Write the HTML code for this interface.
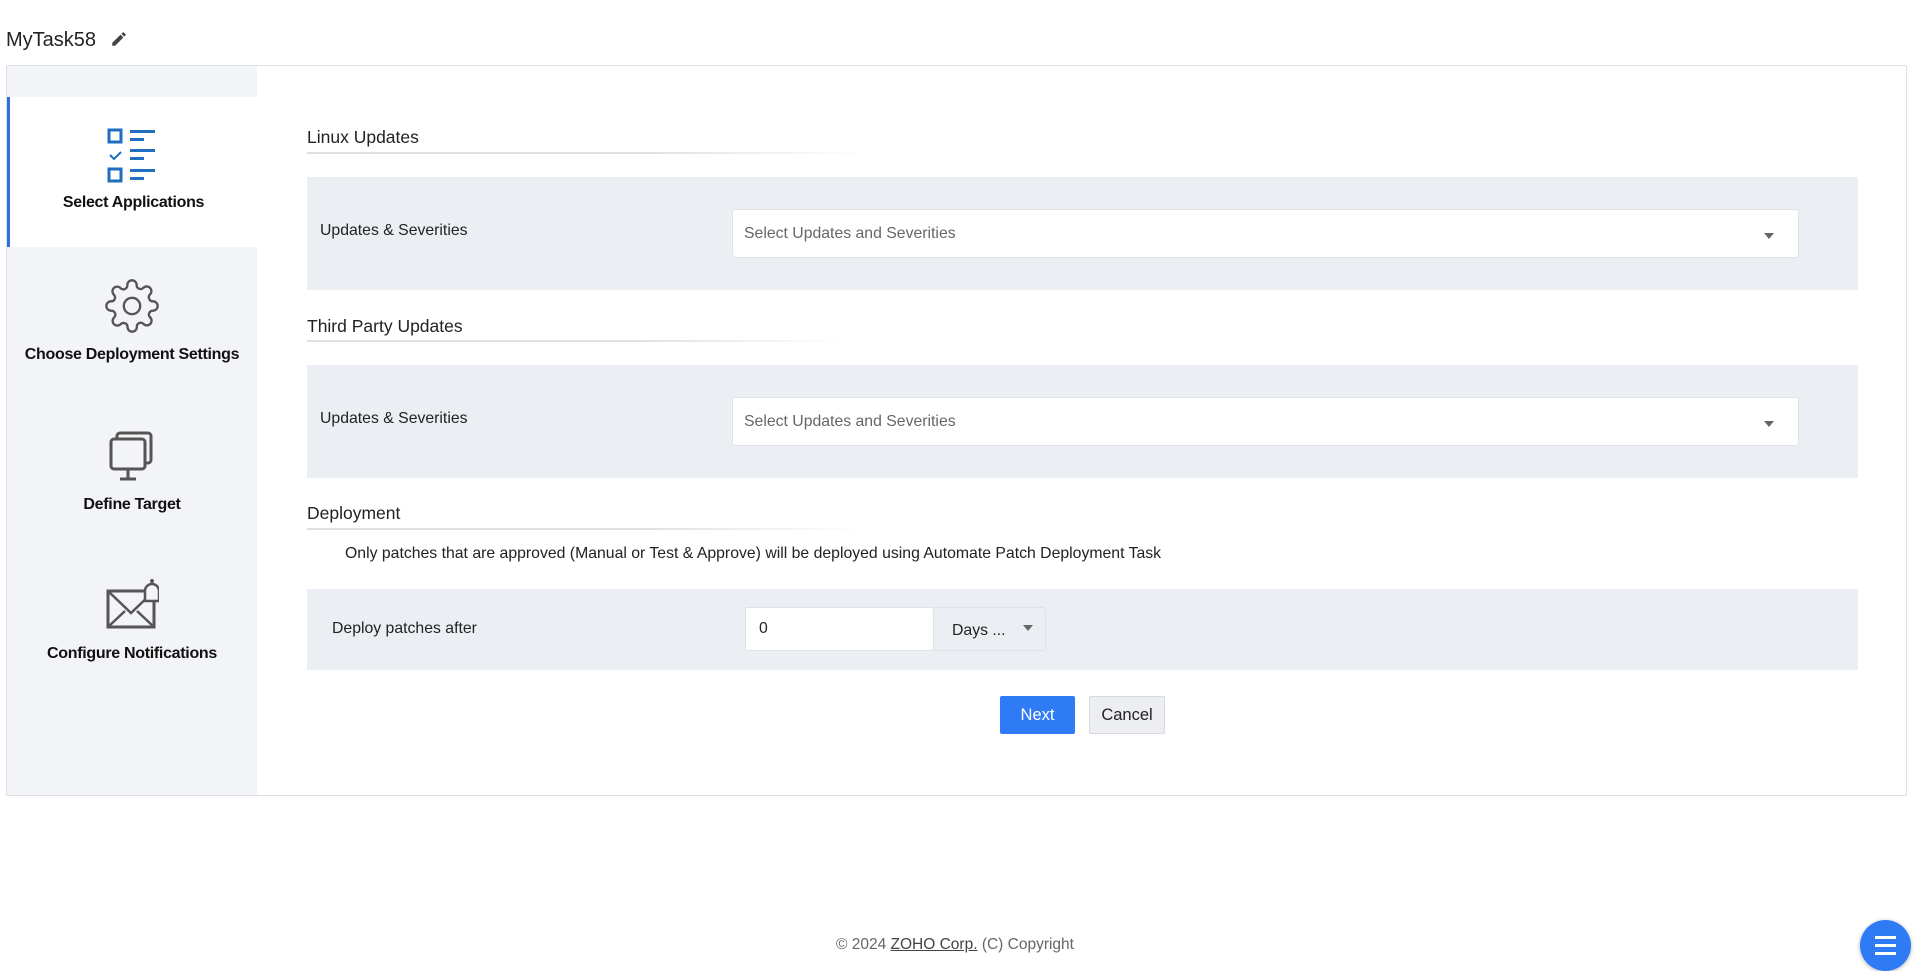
<!DOCTYPE html>
<html><head><meta charset="utf-8"><style>
*{box-sizing:border-box;margin:0;padding:0}
body{width:1919px;height:970px;background:#fff;font-family:"Liberation Sans",sans-serif;color:#222;position:relative;overflow:hidden}
.abs{position:absolute}
.title{left:6px;top:29px;font-size:20px;color:#222}
.card{left:6px;top:65px;width:1901px;height:731px;border:1px solid #dcdfe4;border-radius:2px;background:#fff}
.side{left:0;top:0;width:250px;height:729px;background:#f3f4f7}
.item{position:absolute;left:0;width:250px;text-align:center;font-weight:bold;font-size:16px;color:#111;letter-spacing:-0.3px}
.active{background:#fff;border-left:3px solid #2f6fde;top:31px;height:150px}
.h{font-size:17.5px;color:#222}
.line{height:2px;background:linear-gradient(to right,#dde0e5,#dde0e5 60%,rgba(221,224,229,0))}
.box{background:#ebeef2;left:300px;width:1551px}
.lbl{font-size:15.8px;color:#222}
.sel{background:#fff;border:1px solid #dfe2e6;border-radius:3px;font-size:15.8px;color:#666;padding-left:11px;display:flex;align-items:center}
.arrow{position:absolute;right:24px;top:50%;margin-top:-1px;width:0;height:0;border-left:5px solid transparent;border-right:5px solid transparent;border-top:6px solid #666}
.btn{font-size:16.5px;display:flex;align-items:center;justify-content:center;border-radius:2px}
</style></head><body>
<div class="abs title">MyTask58 <svg width="18" height="18" viewBox="0 0 24 24" style="vertical-align:-2px;margin-left:8px"><path d="M3 17.2V21h3.8L17.8 10l-3.8-3.8L3 17.2zM20.7 7.0c.4-.4.4-1 0-1.4l-2.3-2.3c-.4-.4-1-.4-1.4 0l-1.8 1.8 3.8 3.8 1.7-1.9z" fill="#444"/></svg></div>
<div class="abs card">
 <div class="abs side">
  <div class="item active">
   <svg width="52" height="56" viewBox="0 0 52 56" style="margin-top:30px;margin-left:-3px"><g fill="none" stroke="#1e6fc0" stroke-width="3"><rect x="3" y="3" width="12" height="12"/><rect x="3" y="42" width="12" height="12"/></g><g fill="#1e6fc0"><rect x="24" y="3" width="25" height="3"/><rect x="24" y="11" width="14" height="3"/><rect x="24" y="22" width="25" height="3"/><rect x="24" y="30" width="14" height="3"/><rect x="24" y="42" width="25" height="3"/><rect x="24" y="50" width="14" height="3"/></g><path d="M4 28l4 4 7-7" stroke="#1e6fc0" stroke-width="2" fill="none"/></svg>
   <div style="margin-top:6px">Select Applications</div>
  </div>
  <div class="item" style="top:212px">
   <svg width="56" height="56" viewBox="0 0 24 24"><path d="M12 15.5a3.5 3.5 0 1 0 0-7 3.5 3.5 0 0 0 0 7z" fill="none" stroke="#555" stroke-width="1"/><path d="M19.4 15a1.65 1.65 0 0 0 .33 1.82l.06.06a2 2 0 1 1-2.830 2.83l-.06-.06a1.65 1.65 0 0 0-1.82-.33 1.65 1.65 0 0 0-1 1.51V21a2 2 0 1 1-4 0v-.09A1.65 1.65 0 0 0 9 19.4a1.65 1.65 0 0 0-1.82.33l-.06.06a2 2 0 1 1-2.83-2.83l.06-.06A1.65 1.65 0 0 0 4.68 15a1.65 1.65 0 0 0-1.51-1H3a2 2 0 1 1 0-4h.09A1.65 1.65 0 0 0 4.6 9a1.65 1.65 0 0 0-.33-1.82l-.06-.06a2 2 0 1 1 2.83-2.830l.06.06A1.65 1.65 0 0 0 9 4.68a1.65 1.65 0 0 0 1-1.51V3a2 2 0 1 1 4 0v.09a1.65 1.65 0 0 0 1 1.51 1.65 1.65 0 0 0 1.82-.33l.06-.06a2 2 0 1 1 2.83 2.83l-.06.06A1.65 1.65 0 0 0 19.4 9a1.65 1.65 0 0 0 1.51 1H21a2 2 0 1 1 0 4h-.09a1.65 1.65 0 0 0-1.51 1z" fill="none" stroke="#555" stroke-width="1"/></svg>
   <div style="margin-top:7px">Choose Deployment Settings</div>
  </div>
  <div class="item" style="top:364px">
   <svg width="48" height="52" viewBox="0 0 48 52"><rect x="9" y="3" width="34" height="30" rx="3" fill="none" stroke="#555" stroke-width="3"/><rect x="3" y="9" width="34" height="30" rx="3" fill="#f3f4f7" stroke="#555" stroke-width="3"/><path d="M20 39v9M12 49h16" stroke="#555" stroke-width="3"/></svg>
   <div style="margin-top:9px">Define Target</div>
  </div>
  <div class="item" style="top:511px">
   <svg width="54" height="54" viewBox="0 0 54 54"><rect x="3" y="14" width="46" height="36" fill="none" stroke="#555" stroke-width="3"/><path d="M3 14l23 22 23-22M3 50l17-16M49 50l-17-16" fill="none" stroke="#555" stroke-width="2.5"/><path d="M40 24v-10a7 7 0 0 1 14 0v10z" fill="#f3f4f7" stroke="#555" stroke-width="2.5"/><circle cx="47" cy="4" r="2" fill="#555"/></svg>
   <div style="margin-top:9px">Configure Notifications</div>
  </div>
 </div>
 <div class="abs h" style="left:300px;top:61px">Linux Updates</div>
 <div class="abs line" style="left:300px;top:86px;width:560px"></div>
 <div class="abs box" style="top:111px;height:113px">
  <div class="abs lbl" style="left:13px;top:45px">Updates &amp; Severities</div>
  <div class="abs sel" style="left:425px;top:32px;width:1067px;height:49px">Select Updates and Severities<span class="arrow"></span></div>
 </div>
 <div class="abs h" style="left:300px;top:250px">Third Party Updates</div>
 <div class="abs line" style="left:300px;top:274px;width:540px"></div>
 <div class="abs box" style="top:299px;height:113px">
  <div class="abs lbl" style="left:13px;top:45px">Updates &amp; Severities</div>
  <div class="abs sel" style="left:425px;top:32px;width:1067px;height:49px">Select Updates and Severities<span class="arrow"></span></div>
 </div>
 <div class="abs h" style="left:300px;top:437px">Deployment</div>
 <div class="abs line" style="left:300px;top:462px;width:560px"></div>
 <div class="abs lbl" style="left:338px;top:479px">Only patches that are approved (Manual or Test &amp; Approve) will be deployed using Automate Patch Deployment Task</div>
 <div class="abs box" style="top:523px;height:81px">
  <div class="abs lbl" style="left:25px;top:31px">Deploy patches after</div>
  <div class="abs sel" style="left:438px;top:18px;width:189px;height:44px;color:#222;padding-left:13px">0</div>
  <div class="abs sel" style="left:626px;top:18px;width:113px;height:44px;color:#222;background:#ebeef2;padding-left:18px;padding-top:4px">Days ...<span class="arrow" style="right:12px;margin-top:-4px"></span></div>
 </div>
 <div class="abs btn" style="left:993px;top:630px;width:75px;height:38px;background:#2f7bf5;color:#fff">Next</div>
 <div class="abs btn" style="left:1082px;top:630px;width:76px;height:38px;background:#eceef1;border:1px solid #d6d9de;color:#222">Cancel</div>
</div>
<div class="abs" style="left:0;width:1910px;top:936px;text-align:center;font-size:15.5px;color:#666">© 2024 <u style="color:#444">ZOHO Corp.</u> (C) Copyright</div>
<div class="abs" style="left:1860px;top:920px;width:51px;height:51px;border-radius:50%;background:#2f7bf5;box-shadow:0 1px 4px rgba(0,0,0,.3)">
 <div style="position:absolute;left:15px;top:16px;width:21px;height:3px;background:#fff;box-shadow:0 8px 0 #fff,0 16px 0 #fff"></div>
</div>
</body></html>
